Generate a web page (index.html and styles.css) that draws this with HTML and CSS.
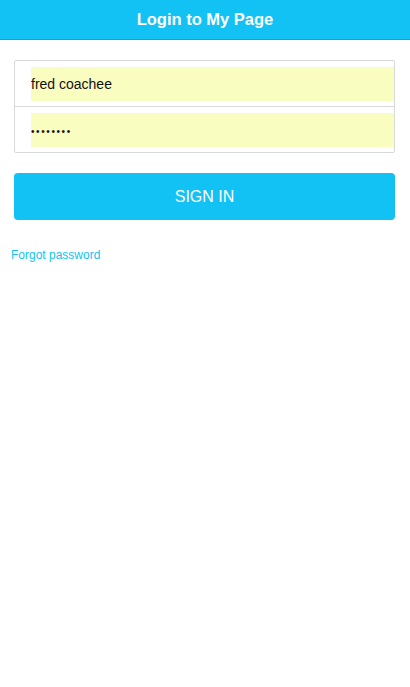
FILE: index.html
```html
<!DOCTYPE html>
<html>
<head>
<meta charset="utf-8">
<link rel="stylesheet" href="styles.css">
</head>
<body>
<header class="topbar"><h1 class="title">Login to My Page</h1></header>
<main class="content">
  <div class="fields">
    <div class="row"><div class="input">fred coachee</div></div>
    <div class="row row-last"><div class="input pw">••••••••</div></div>
  </div>
  <button class="signin">SIGN IN</button>
  <a class="forgot" href="#">Forgot password</a>
</main>
</body>
</html>
```
FILE: styles.css
```css
* { box-sizing: border-box; }
html, body { margin: 0; padding: 0; background: #fff; }
body { font-family: "Liberation Sans", Arial, sans-serif; width: 410px; height: 687px; }
.topbar {
  height: 40px;
  background: #12c2f4;
  border-bottom: 1px solid #0ea6d3;
  display: flex;
  align-items: center;
  justify-content: center;
}
.title {
  margin: 0;
  color: #fff;
  font-size: 16.5px;
  font-weight: bold;
}
.content {
  padding: 20px 15px 0 14px;
  display: flex;
  flex-direction: column;
}
.fields {
  border: 1px solid #d9d9d9;
  border-radius: 2px;
  display: flex;
  flex-direction: column;
}
.row {
  padding: 6px 0 5px 16px;
  border-bottom: 1px solid #d9d9d9;
}
.row-last { border-bottom: none; }
.input {
  height: 34px;
  background: #fafdc0;
  display: flex;
  align-items: center;
  font-size: 14px;
  color: #111;
}
.pw { font-size: 10px; letter-spacing: 1.6px; padding-top: 2px; }
.signin {
  margin-top: 20px;
  height: 47px;
  border: none;
  border-radius: 4px;
  background: #12c2f4;
  color: #fff;
  font-family: "Liberation Sans", Arial, sans-serif;
  font-size: 16px;
  padding: 1px 0 0;
}
.forgot {
  margin: 28px 0 0 -3px;
  color: #12c2f4;
  font-size: 12px;
  text-decoration: none;
}
```
